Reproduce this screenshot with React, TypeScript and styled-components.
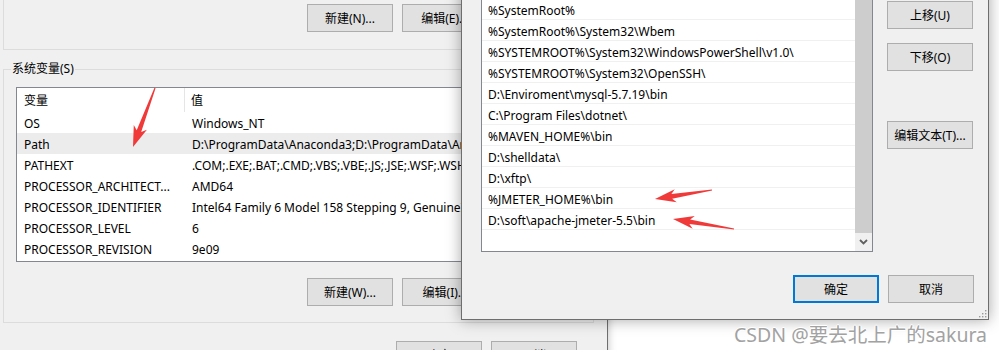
import React from "react";
import styled, { createGlobalStyle } from "styled-components";

const GlobalStyle = createGlobalStyle`
  html, body { margin: 0; padding: 0; background: #ffffff; overflow: hidden; }
  * { box-sizing: border-box; }
`;

const FONT = `"Segoe UI", "Noto Sans", "Noto Sans CJK SC", sans-serif`;

const Desktop = styled.div`
  position: relative;
  width: 999px;
  height: 350px;
  overflow: hidden;
  background: #ffffff;
  font-family: ${FONT};
  font-size: 12px;
  color: #000;
`;

const BackWindow = styled.div`
  position: absolute;
  left: 0;
  top: -30px;
  width: 608px;
  height: 420px;
  background: #f0f0f0;
  border-right: 1px solid #6f6f6f;
  box-shadow: 0 0 8px rgba(0, 0, 0, 0.25);
  padding: 0 13px 0 3px;
  display: flex;
  flex-direction: column;
`;

const GroupBox = styled.fieldset<{ $open?: boolean }>`
  margin: 0;
  min-width: 0;
  border: 1px solid #dcdcdc;
  ${(p) => (p.$open ? "border-top-color: transparent;" : "")}
  padding: ${(p) => (p.$open ? "33px 10px 17px 12px" : "10px 10px 16px 12px")};
  display: flex;
  flex-direction: column;
`;

const GroupLabel = styled.legend`
  margin-left: -5px;
  padding: 0 1px;
  line-height: 16px;
  font-size: 12px;
  color: #000;
`;

const SysGroup = styled(GroupBox)`
  margin-top: 11px;
`;

const ButtonRow = styled.div<{ $gap?: number }>`
  display: flex;
  justify-content: flex-end;
  gap: ${(p) => p.$gap ?? 9}px;
`;

const WinButton = styled.div<{ $primary?: boolean }>`
  width: 86px;
  height: 28px;
  flex: none;
  display: flex;
  align-items: center;
  justify-content: center;
  background: #e1e1e1;
  border: ${(p) => (p.$primary ? "2px solid #0078d7" : "1px solid #adadad")};
  font-size: 12px;
  white-space: nowrap;
  overflow: hidden;
  color: #000;
`;

const ListView = styled.div`
  border: 1px solid #828790;
  background: #ffffff;
  height: 175px;
  margin-bottom: 16px;
  overflow: hidden;
`;

const HeaderRow = styled.div`
  display: grid;
  grid-template-columns: 168px 1fr;
  height: 24px;
  align-items: stretch;
`;

const HeaderCell = styled.div<{ $sep?: boolean }>`
  display: flex;
  align-items: center;
  padding-left: ${(p) => (p.$sep ? 7 : 6)}px;
  ${(p) => (p.$sep ? "border-right: 1px solid #e5e5e5;" : "")}
  white-space: nowrap;
  overflow: hidden;
`;

const VarRow = styled.div<{ $selected?: boolean }>`
  display: grid;
  grid-template-columns: 168px 1fr;
  height: 21px;
  align-items: center;
  padding-top: 1px;
  background: ${(p) => (p.$selected ? "#ececec" : "transparent")};
`;

const Cell = styled.div`
  padding-left: 7px;
  white-space: nowrap;
  overflow: hidden;
`;

const BottomRow = styled(ButtonRow)`
  margin-top: 18px;
  padding-right: 17px;
`;

const Dialog = styled.div`
  position: absolute;
  left: 461px;
  top: -20px;
  width: 528px;
  height: 340px;
  background: #f0f0f0;
  border: 1px solid #6e6e6e;
  box-shadow: 0 0 14px rgba(0, 0, 0, 0.35);
  padding: 17px 14px 15px 19px;
  display: flex;
  flex-direction: column;
`;

const DialogBody = styled.div`
  display: flex;
  gap: 14px;
  align-items: flex-start;
`;

const PathBox = styled.div`
  width: 392px;
  height: 254px;
  border: 1px solid #828790;
  background: #ffffff;
  display: flex;
`;

const PathItems = styled.div`
  flex: 1;
  display: flex;
  flex-direction: column;
  overflow: hidden;
`;

const PathItem = styled.div`
  height: 21px;
  flex: none;
  border-bottom: 1px solid #f0f0f0;
  padding: 2px 0 0 6px;
  display: flex;
  align-items: center;
  white-space: nowrap;
`;

const ScrollBar = styled.div`
  width: 17px;
  display: flex;
  flex-direction: column;
  background: #f0f0f0;
`;

const ScrollThumb = styled.div`
  flex: 1;
  background: #cdcdcd;
`;

const ScrollArrow = styled.div`
  height: 18px;
  display: flex;
  align-items: center;
  justify-content: center;
`;

const ButtonColumn = styled.div`
  display: flex;
  flex-direction: column;
  gap: 14px;
  margin-top: 3px;
`;

const ColumnSpacer = styled.div`
  height: 22px;
`;

const DialogFooter = styled(ButtonRow)`
  margin-top: auto;
  margin-bottom: 1px;
`;

const Grip = styled.svg`
  position: absolute;
  right: 1px;
  bottom: 1px;
`;

const Overlay = styled.svg`
  position: absolute;
  left: 0;
  top: 0;
  pointer-events: none;
`;

const Watermark = styled.div`
  position: absolute;
  left: 734px;
  top: 323px;
  font-family: "Noto Sans", "Noto Sans CJK SC", sans-serif;
  font-size: 19.5px;
  line-height: 24px;
  color: #a2a2a2;
  white-space: nowrap;
  text-shadow: 1px 0 0 #fff, -1px 0 0 #fff, 0 1px 0 #fff, 0 -1px 0 #fff;
`;

const vars: [string, string][] = [
  ["OS", "Windows_NT"],
  ["Path", "D:\\ProgramData\\Anaconda3;D:\\ProgramData\\Anaconda3\\Library\\mingw-w64\\bin;"],
  ["PATHEXT", ".COM;.EXE;.BAT;.CMD;.VBS;.VBE;.JS;.JSE;.WSF;.WSH;.MSC"],
  ["PROCESSOR_ARCHITECT...", "AMD64"],
  ["PROCESSOR_IDENTIFIER", "Intel64 Family 6 Model 158 Stepping 9, GenuineIntel"],
  ["PROCESSOR_LEVEL", "6"],
  ["PROCESSOR_REVISION", "9e09"],
];

const paths = [
  "%SystemRoot%",
  "%SystemRoot%\\System32\\Wbem",
  "%SYSTEMROOT%\\System32\\WindowsPowerShell\\v1.0\\",
  "%SYSTEMROOT%\\System32\\OpenSSH\\",
  "D:\\Enviroment\\mysql-5.7.19\\bin",
  "C:\\Program Files\\dotnet\\",
  "%MAVEN_HOME%\\bin",
  "D:\\shelldata\\",
  "D:\\xftp\\",
  "%JMETER_HOME%\\bin",
  "D:\\soft\\apache-jmeter-5.5\\bin",
];

const arrowPoints = (L: number, hw: number) =>
  [
    [0, -0.6],
    [L - 17, -2.4],
    [L - 21, -hw],
    [L, 0],
    [L - 21, hw],
    [L - 17, 2.4],
    [0, 0.6],
  ]
    .map((p) => p.join(","))
    .join(" ");

const Arrow: React.FC<{ x1: number; y1: number; x2: number; y2: number; hw?: number }> = ({
  x1,
  y1,
  x2,
  y2,
  hw = 6.5,
}) => {
  const dx = x2 - x1;
  const dy = y2 - y1;
  const L = Math.sqrt(dx * dx + dy * dy);
  const a = (Math.atan2(dy, dx) * 180) / Math.PI;
  return (
    <g transform={`translate(${x1} ${y1}) rotate(${a})`}>
      <polygon points={arrowPoints(L, hw)} fill="#f03a3a" />
    </g>
  );
};

export default function App() {
  return (
    <Desktop>
      <GlobalStyle />
      <BackWindow>
        <GroupBox $open>
          <ButtonRow>
            <WinButton>新建(N)...</WinButton>
            <WinButton>编辑(E)...</WinButton>
            <WinButton>删除(D)</WinButton>
          </ButtonRow>
        </GroupBox>
        <SysGroup>
          <GroupLabel>系统变量(S)</GroupLabel>
          <ListView>
            <HeaderRow>
              <HeaderCell $sep>变量</HeaderCell>
              <HeaderCell>值</HeaderCell>
            </HeaderRow>
            {vars.map(([k, v]) => (
              <VarRow key={k} $selected={k === "Path"}>
                <Cell>{k}</Cell>
                <Cell>{v}</Cell>
              </VarRow>
            ))}
          </ListView>
          <ButtonRow>
            <WinButton>新建(W)...</WinButton>
            <WinButton>编辑(I)...</WinButton>
            <WinButton>删除(L)</WinButton>
          </ButtonRow>
        </SysGroup>
        <BottomRow>
          <WinButton>确定</WinButton>
          <WinButton>取消</WinButton>
        </BottomRow>
      </BackWindow>

      <Dialog>
        <DialogBody>
          <PathBox>
            <PathItems>
              {paths.map((p) => (
                <PathItem key={p}>{p}</PathItem>
              ))}
            </PathItems>
            <ScrollBar>
              <ScrollThumb />
              <ScrollArrow>
                <svg width="9" height="6" viewBox="0 0 9 6">
                  <polyline points="1,1 4.5,4.5 8,1" fill="none" stroke="#606060" strokeWidth="1.8" />
                </svg>
              </ScrollArrow>
            </ScrollBar>
          </PathBox>
          <ButtonColumn>
            <WinButton>上移(U)</WinButton>
            <WinButton>下移(O)</WinButton>
            <ColumnSpacer />
            <WinButton>编辑文本(T)...</WinButton>
          </ButtonColumn>
        </DialogBody>
        <DialogFooter>
          <WinButton $primary>确定</WinButton>
          <WinButton>取消</WinButton>
        </DialogFooter>
        <Grip width="10" height="10" viewBox="0 0 10 10">
          {[
            [8, 2],
            [8, 5],
            [8, 8],
            [5, 5],
            [5, 8],
            [2, 8],
          ].map(([x, y]) => (
            <rect key={`${x}-${y}`} x={x} y={y} width="1.4" height="1.4" fill="#9a9a9a" />
          ))}
        </Grip>
      </Dialog>

      <Overlay width="999" height="350" viewBox="0 0 999 350">
        <Arrow x1={155} y1={88} x2={133} y2={147} hw={7} />
        <Arrow x1={712} y1={190} x2={655} y2={199} />
        <Arrow x1={734} y1={229} x2={673} y2={219} />
      </Overlay>
      <Watermark>CSDN @要去北上广的sakura</Watermark>
    </Desktop>
  );
}
